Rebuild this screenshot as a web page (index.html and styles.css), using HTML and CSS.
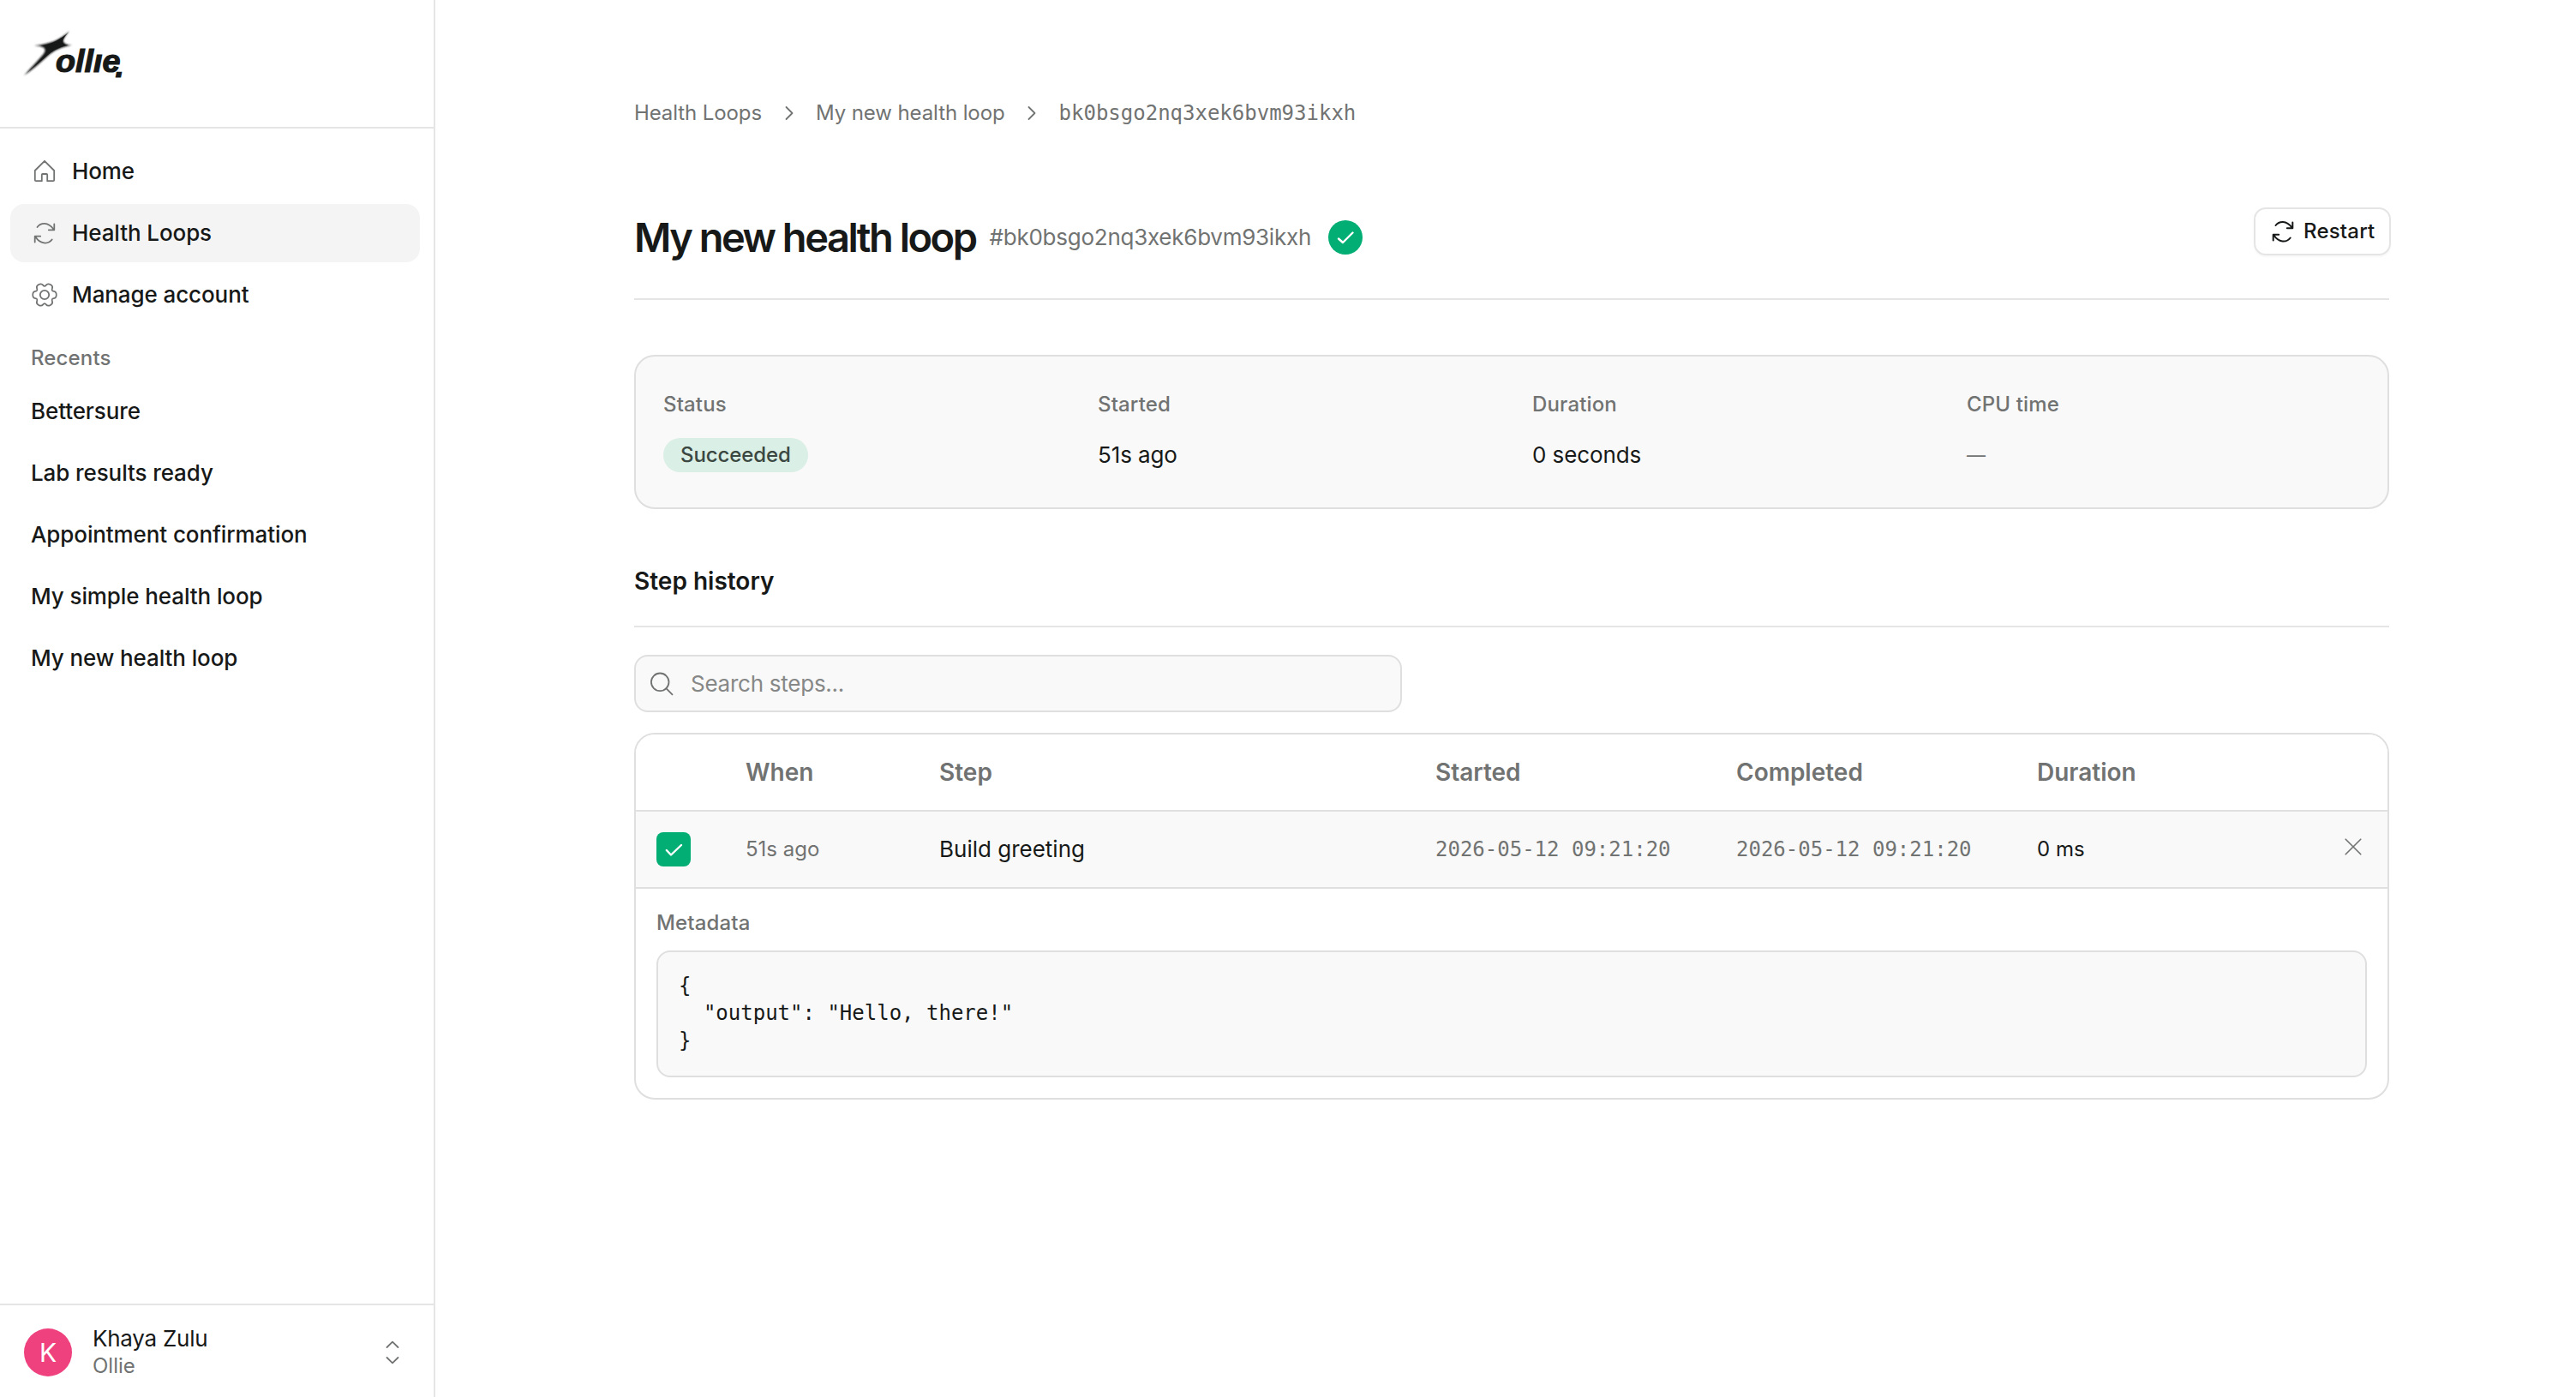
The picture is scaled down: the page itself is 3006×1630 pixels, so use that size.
FILE: index.html
```html
<!DOCTYPE html>
<html lang="en">
<head>
    <meta charset="UTF-8">
    <title>My new health loop</title>
    <link rel="stylesheet" href="styles.css">
</head>
<body>
<div class="layout">
    <!-- sidebar -->
    <aside class="sidebar">
        <div class="brand">
            <svg class="logo" viewBox="0 0 140 80" width="140" height="80">
                <defs>
                    <filter id="soft" x="-10%" y="-10%" width="120%" height="120%">
                        <feGaussianBlur stdDeviation="0.8"/>
                    </filter>
                </defs>
                <path filter="url(#soft)" d="M55 2C50 8 47 12 48 15Q50 18.5 58 18.7C46 20 37 25 30 31C22 38 14 46 2 54C12 43 23 32 26 27C28 22 25 20 14 19C32 18 45 12 55 2Z"/>
                <path d="M54.500 3C49 9 46 13 47.500 16Q49 18.500 54 18.800C45 20 36 25 30 30C22 37 14 44 3 53C14 43 25 32 28 27C30 22 28 20 22 19.300C34 18 46 11 54.500 3Z"/>
                <text class="logo-text" x="39" y="50.200" textLength="75.500" lengthAdjust="spacingAndGlyphs">ollıe</text>
                <text class="logo-text" x="108.500" y="55.500">.</text>
            </svg>
        </div>
        <nav class="nav">
            <a class="nav-item">
                <svg class="icon" viewBox="0 0 32 32"><path d="M16 3.800L27.200 15V26a1.200 1.200 0 0 1-1.200 1.200H19.200V20a1 1 0 0 0-1-1H13.800a1 1 0 0 0-1 1v7.200H6A1.200 1.200 0 0 1 4.800 26V15Z"/></svg>
                <span>Home</span>
            </a>
            <a class="nav-item active">
                <svg class="icon" viewBox="0 0 32 32"><path d="M7.500 9C11.500 3.800 20 2.500 26.500 11.500M27.300 5.500V12.300H20.800M4.700 26.500V19.700H11.200M5.500 20.500C11 29 20 29.500 24.700 23.500"/></svg>
                <span>Health Loops</span>
            </a>
            <a class="nav-item">
                <svg class="icon" viewBox="0 0 32 32">
                    <path transform="translate(16 16) scale(.95)" d="M14.500 0Q14.500 3.900 11.350 4.300Q8.200 4.750 9.400 7.700Q10.600 10.600 7.250 12.550Q3.900 14.500 1.950 12Q0 9.500 -1.950 12Q-3.900 14.500 -7.250 12.550Q-10.600 10.600 -9.400 7.700Q-8.200 4.750 -11.350 4.300Q-14.500 3.900 -14.500 0Q-14.500 -3.900 -11.350 -4.300Q-8.200 -4.750 -9.400 -7.700Q-10.600 -10.600 -7.250 -12.550Q-3.900 -14.500 -1.950 -12Q0 -9.500 1.950 -12Q3.900 -14.500 7.250 -12.550Q10.600 -10.600 9.400 -7.700Q8.200 -4.750 11.350 -4.300Q14.500 -3.900 14.500 0Z"/>
                    <circle cx="16" cy="16" r="5.200"/>
                </svg>
                <span>Manage account</span>
            </a>
            <h3 class="nav-title">Recents</h3>
            <a class="nav-item">Bettersure</a>
            <a class="nav-item">Lab results ready</a>
            <a class="nav-item">Appointment confirmation</a>
            <a class="nav-item">My simple health loop</a>
            <a class="nav-item">My new health loop</a>
        </nav>
        <div class="user">
            <div class="avatar">K</div>
            <div class="user-info">
                <div class="user-name">Khaya Zulu</div>
                <div class="user-org">Ollie</div>
            </div>
            <svg class="icon" viewBox="0 0 32 32"><path d="M9.500 10L16 3.700L22.500 10M9.500 22L16 28.300L22.500 22"/></svg>
        </div>
    </aside>

    <!-- content -->
    <main class="main">
        <div class="breadcrumb">
            <span>Health Loops</span>
            <svg class="icon" viewBox="0 0 32 32"><path d="M12.500 9L19.500 16L12.500 23"/></svg>
            <span>My new health loop</span>
            <svg class="icon" viewBox="0 0 32 32"><path d="M12.500 9L19.500 16L12.500 23"/></svg>
            <span class="mono">bk0bsgo2nq3xek6bvm93ikxh</span>
        </div>

        <header class="page-header">
            <div class="heading">
                <h1>My new health loop</h1>
                <span class="run-id">#bk0bsgo2nq3xek6bvm93ikxh</span>
                <svg class="check round" viewBox="0 0 40 40"><path d="M12 21.500L17 26L28.500 14.500"/></svg>
            </div>
            <button class="btn">
                <svg class="icon" viewBox="0 0 32 32"><path d="M7.500 9C11.500 3.800 20 2.500 26.500 11.500M27.300 5.500V12.300H20.800M4.700 26.500V19.700H11.200M5.500 20.500C11 29 20 29.500 24.700 23.500"/></svg>
                <span>Restart</span>
            </button>
        </header>

        <section class="stats">
            <div class="stat">
                <div class="label">Status</div>
                <div class="value"><span class="badge">Succeeded</span></div>
            </div>
            <div class="stat">
                <div class="label">Started</div>
                <div class="value">51s ago</div>
            </div>
            <div class="stat">
                <div class="label">Duration</div>
                <div class="value">0 seconds</div>
            </div>
            <div class="stat">
                <div class="label">CPU time</div>
                <div class="value dash">—</div>
            </div>
        </section>

        <h2 class="section-title">Step history</h2>

        <div class="search">
            <svg class="icon" viewBox="0 0 32 32"><circle cx="14.200" cy="13.800" r="10.300"/><path d="M21.300 21.200L28.500 28.400"/></svg>
            <span>Search steps...</span>
        </div>

        <section class="table">
            <div class="row head">
                <span></span>
                <span>When</span>
                <span>Step</span>
                <span>Started</span>
                <span>Completed</span>
                <span>Duration</span>
                <span></span>
            </div>
            <div class="row">
                <svg class="check" viewBox="0 0 40 40"><path d="M11.800 21L17 26.500L29 15"/></svg>
                <span class="when">51s ago</span>
                <span>Build greeting</span>
                <span class="mono">2026-05-12 09:21:20</span>
                <span class="mono">2026-05-12 09:21:20</span>
                <span class="ms">0 ms</span>
                <svg class="icon close" viewBox="0 0 32 32"><path d="M7.200 7.200L24.800 24.800M24.800 7.200L7.200 24.800"/></svg>
            </div>
            <div class="detail">
                <div class="label">Metadata</div>
                <pre class="code">{
  "output": "Hello, there!"
}</pre>
            </div>
        </section>
    </main>
</div>
</body>
</html>
```
FILE: styles.css
```css
* {
    margin: 0;
    padding: 0;
    box-sizing: border-box;
}
body {
    font: 26px/32px Inter, "Liberation Sans", sans-serif;
    color: #171918;
    background-color: #fff;
}
.layout {
    display: flex;
    height: 1630px;
}
.icon {
    width: 32px;
    height: 32px;
    flex: none;
    fill: none;
    stroke: #717372;
    stroke-width: 1.8;
    stroke-linecap: round;
    stroke-linejoin: round;
}
.mono {
    font-family: "DejaVu Sans Mono", monospace;
    font-size: 24px;
}
.label {
    font-size: 24px;
    font-weight: 500;
    letter-spacing: 0.15px;
    color: #717372;
}

/* sidebar */
.sidebar {
    display: flex;
    flex-direction: column;
    width: 508px;
    flex: none;
    border-right: 2px solid #e5e5e5;
}
.brand {
    height: 150px;
    padding: 34px 26px;
    border-bottom: 2px solid #e5e5e5;
}
.logo {
    display: block;
    fill: #171918;
}
.logo-text {
    font: italic bold 37px "Liberation Sans", Arial, sans-serif;
    stroke: #171918;
    stroke-width: 1.2;
}
.nav {
    display: flex;
    flex-direction: column;
    flex: 1;
    gap: 4px;
    padding: 16px 16px 0 12px;
}
.nav-item {
    display: flex;
    align-items: center;
    gap: 16px;
    height: 68px;
    padding: 0 24px;
    border-radius: 16px;
    font-weight: 500;
    letter-spacing: -0.1px;
}
.nav-item.active {
    background-color: #f4f4f4;
}
.nav-title {
    height: 60px;
    padding: 12px 24px 0;
    font-size: 24px;
    font-weight: 500;
    line-height: 48px;
    letter-spacing: 0.15px;
    color: #717372;
}
.user {
    display: flex;
    align-items: center;
    gap: 24px;
    height: 109px;
    padding: 3px 32px 0 28px;
    border-top: 2px solid #e5e5e5;
}
.avatar {
    width: 56px;
    height: 56px;
    border-radius: 50%;
    background-color: #ee417d;
    color: #fff;
    font-size: 30px;
    line-height: 56px;
    text-align: center;
}
.user-info {
    flex: 1;
}
.user-name {
    letter-spacing: -0.25px;
}
.user-org {
    font-size: 24px;
    color: #717372;
}

/* content */
.main {
    width: 2280px;
    padding: 116px 0 0 232px;
}
.breadcrumb {
    display: flex;
    align-items: center;
    gap: 15.5px;
    height: 32px;
    font-size: 24px;
    letter-spacing: -0.1px;
    color: #717372;
}
.breadcrumb .mono {
    letter-spacing: 0;
}
.page-header {
    display: flex;
    align-items: flex-start;
    justify-content: space-between;
    height: 108px;
    margin-top: 94px;
    border-bottom: 2px solid #e5e5e5;
}
.heading {
    display: flex;
    align-items: center;
    height: 69px;
}
h1 {
    font-size: 47px;
    font-weight: 600;
    line-height: 70px;
    letter-spacing: -2.5px;
}
.run-id {
    margin: 0 20px 0 16px;
    letter-spacing: -0.25px;
    color: #717372;
}
.check {
    width: 40px;
    height: 40px;
    border-radius: 8px;
    background-color: #02ae74;
    fill: none;
    stroke: #fff;
    stroke-width: 2.4;
    stroke-linecap: round;
    stroke-linejoin: round;
}
.check.round {
    border-radius: 50%;
}
.btn {
    display: flex;
    align-items: center;
    gap: 8px;
    width: 160px;
    height: 56px;
    margin-right: -2px;
    padding-left: 16px;
    border: 2px solid #e5e5e5;
    border-radius: 14px;
    background-color: #fff;
    box-shadow: 0 2px 2px rgba(0, 0, 0, 0.03);
    color: #171918;
    font: 500 24px/32px Inter, sans-serif;
    letter-spacing: 0.2px;
}
.btn .icon {
    stroke: #171918;
    stroke-width: 2;
}
.stats {
    display: grid;
    grid-template-columns: repeat(4, 1fr);
    gap: 48px;
    height: 180px;
    margin-top: 64px;
    padding: 40px 32px 0;
    border: 2px solid #dfdfdf;
    border-radius: 24px;
    background-color: #f9f9f9;
}
.stat {
    display: flex;
    flex-direction: column;
    gap: 23px;
}
.value {
    line-height: 40px;
    letter-spacing: -0.1px;
}
.value.dash {
    font-size: 22px;
    color: #717372;
}
.badge {
    display: inline-block;
    height: 40px;
    padding: 0 20px;
    border-radius: 20px;
    background-color: #daefe5;
    color: #3b4741;
    font-size: 24px;
    font-weight: 500;
    vertical-align: top;
}
.section-title {
    margin-top: 62px;
    padding-bottom: 30px;
    border-bottom: 2px solid #e5e5e5;
    font-size: 28px;
    font-weight: 600;
    line-height: 44px;
}
.search {
    display: flex;
    align-items: center;
    gap: 18px;
    width: 896px;
    height: 67px;
    margin-top: 32px;
    padding-left: 14px;
    border: 2px solid #dfdfdf;
    border-radius: 16px;
    background-color: #f9f9f9;
    letter-spacing: -0.25px;
    color: #868887;
}
.table {
    margin-top: 24px;
    border: 2px solid #dfdfdf;
    border-radius: 24px;
    overflow: hidden;
}
.row {
    display: grid;
    grid-template-columns: 104px 226px 579px 351px 351px 1fr 32px;
    align-items: center;
    height: 90px;
    padding: 0 24px;
    border-bottom: 2px solid #e0e0e0;
    background-color: #f9f9f9;
}
.row.head {
    background-color: #fff;
    color: #717372;
    font-size: 28px;
    font-weight: 600;
}
.row .mono {
    color: #717372;
}
.when {
    font-size: 24px;
    color: #717372;
}
.ms {
    font-size: 24px;
}
.close {
    margin-bottom: 6px;
    stroke-width: 1.6;
}
.detail {
    padding: 24px;
}
.code {
    margin-top: 16px;
    padding: 23px 24px 25px;
    border: 2px solid #dfdfdf;
    border-radius: 16px;
    background-color: #f9f9f9;
    font: 24px/32px "DejaVu Sans Mono", monospace;
}
```
